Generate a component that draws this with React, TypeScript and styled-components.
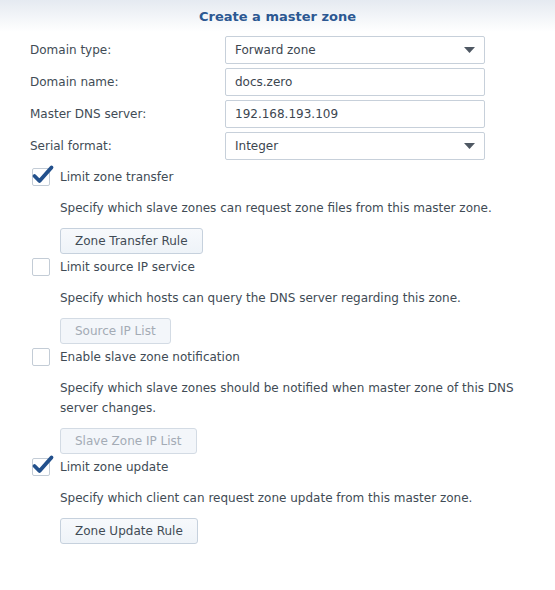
import styled, { createGlobalStyle } from 'styled-components';

const GlobalStyle = createGlobalStyle`
  body {
    margin: 0;
    background: #ffffff;
    font-family: 'DejaVu Sans', Verdana, sans-serif;
    font-size: 12px;
    color: #414b55;
  }
`;

interface OptionType {
  label: string;
  checked: boolean;
  description: string;
  button: string;
}

const options: OptionType[] = [
  {
    label: 'Limit zone transfer',
    checked: true,
    description:
      'Specify which slave zones can request zone files from this master zone.',
    button: 'Zone Transfer Rule',
  },
  {
    label: 'Limit source IP service',
    checked: false,
    description: 'Specify which hosts can query the DNS server regarding this zone.',
    button: 'Source IP List',
  },
  {
    label: 'Enable slave zone notification',
    checked: false,
    description:
      'Specify which slave zones should be notified when master zone of this DNS server changes.',
    button: 'Slave Zone IP List',
  },
  {
    label: 'Limit zone update',
    checked: true,
    description: 'Specify which client can request zone update from this master zone.',
    button: 'Zone Update Rule',
  },
];

const Arrow = () => (
  <svg width="11" height="6" viewBox="0 0 11 6">
    <path d="M0 0 H11 L5.5 6 Z" fill="#4f5863" />
  </svg>
);

const Check = () => (
  <svg width="24" height="22" viewBox="0 0 24 22">
    <path
      d="M3.5 12 L8.5 17 L20.5 3.5"
      fill="none"
      stroke="#22508c"
      strokeWidth="3.8"
      strokeLinecap="round"
      strokeLinejoin="round"
    />
  </svg>
);

export default function App() {
  return (
    <Page>
      <GlobalStyle />
      <Header>Create a master zone</Header>
      <Body>
        <Form>
          <FormRow>
            <Label>Domain type:</Label>
            <Field>
              Forward zone
              <Arrow />
            </Field>
          </FormRow>
          <FormRow>
            <Label>Domain name:</Label>
            <Field>docs.zero</Field>
          </FormRow>
          <FormRow>
            <Label>Master DNS server:</Label>
            <Field>192.168.193.109</Field>
          </FormRow>
          <FormRow>
            <Label>Serial format:</Label>
            <Field>
              Integer
              <Arrow />
            </Field>
          </FormRow>
        </Form>

        {options.map((option) => (
          <Section key={option.label}>
            <CheckRow>
              <CheckBox>{option.checked && <Check />}</CheckBox>
              {option.label}
            </CheckRow>
            <Description>{option.description}</Description>
            <RuleButton disabled={!option.checked}>{option.button}</RuleButton>
          </Section>
        ))}
      </Body>
    </Page>
  );
}

const Page = styled.div`
  width: 555px;
  height: 590px;
  background: #ffffff;
`;

const Header = styled.div`
  height: 32px;
  display: flex;
  align-items: center;
  justify-content: center;
  font-weight: bold;
  font-size: 13px;
  color: #2c5892;
  background: linear-gradient(to bottom, #e5eaf1 0%, #ffffff 100%);
`;

const Body = styled.div`
  display: flex;
  flex-direction: column;
  padding: 4px 30px 0 30px;
`;

const Form = styled.div`
  display: flex;
  flex-direction: column;
  gap: 4px;
  margin-bottom: 4px;
`;

const FormRow = styled.div`
  display: grid;
  grid-template-columns: 195px 260px;
  align-items: center;
  height: 28px;
`;

const Label = styled.div`
  color: #414b55;
`;

const Field = styled.div`
  box-sizing: border-box;
  height: 28px;
  border: 1px solid #c7d0da;
  border-radius: 2px;
  padding: 0 9px 0 9px;
  display: flex;
  align-items: center;
  justify-content: space-between;
  color: #3c4650;
`;

const Section = styled.div`
  display: flex;
  flex-direction: column;
  align-items: flex-start;
`;

const CheckRow = styled.div`
  height: 26px;
  display: flex;
  align-items: center;
  gap: 10px;
  padding-left: 2px;
`;

const CheckBox = styled.div`
  position: relative;
  box-sizing: border-box;
  width: 18px;
  height: 18px;
  border: 1px solid #c3ccd6;
  border-radius: 2px;
  background: #ffffff;

  svg {
    position: absolute;
    left: -2px;
    top: -5px;
  }
`;

const Description = styled.div`
  margin: 8px 0 0 30px;
  line-height: 20px;
  width: 462px;
`;

const RuleButton = styled.button`
  margin: 10px 0 0 30px;
  height: 26px;
  padding: 0 14px;
  border: 1px solid #c6d1dd;
  border-radius: 3px;
  background: linear-gradient(to bottom, #f7f9fc, #eef3f8);
  font-family: 'DejaVu Sans', Verdana, sans-serif;
  font-size: 12px;
  color: #414b55;

  &:disabled {
    color: #a3abb5;
    border-color: #d3dbe4;
    background: #f3f6fa;
  }
`;
